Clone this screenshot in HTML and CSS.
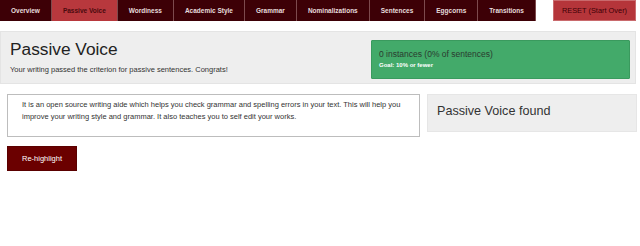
FILE: index.html
```html
<!DOCTYPE html>
<html lang="en">
<head>
    <meta charset="UTF-8">
    <meta name="viewport" content="width=device-width, initial-scale=1.0">
    <title>Passive Voice</title>
    <link rel="stylesheet" href="styles.css">
</head>
<body>
    <div class="nav">
        <div class="tabs">
            <a class="tab">Overview</a>
            <a class="tab active">Passive Voice</a>
            <a class="tab">Wordiness</a>
            <a class="tab">Academic Style</a>
            <a class="tab">Grammar</a>
            <a class="tab">Nominalizations</a>
            <a class="tab">Sentences</a>
            <a class="tab">Eggcorns</a>
            <a class="tab">Transitions</a>
        </div>
        <button class="reset">RESET (Start Over)</button>
    </div>

    <div class="header">
        <div class="intro">
            <h1>Passive Voice</h1>
            <p>Your writing passed the criterion for passive sentences. Congrats!</p>
        </div>
        <div class="result">
            <div class="count">0 instances (0% of sentences)</div>
            <div class="goal">Goal: 10% or fewer</div>
        </div>
    </div>

    <div class="content">
        <div class="row">
            <div class="text-box">It is an open source writing aide which helps you check grammar and spelling errors in your text. This will help you improve your writing style and grammar. It also teaches you to self edit your works.</div>
            <div class="found">Passive Voice found</div>
        </div>
        <button class="rehighlight">Re-highlight</button>
    </div>
</body>
</html>
```

FILE: styles.css
```css
body {
    font-family: 'Liberation Sans', Arial, sans-serif;
    color: #333;
    margin: 0;
    background-color: #ffffff;
}
.nav {
    display: flex;
    width: 636px;
    height: 21px;
}
.tabs {
    display: flex;
    background-color: #3d0006;
}
.tab {
    display: block;
    padding: 0 11px;
    line-height: 21px;
    font-size: 6.5px;
    font-weight: bold;
    color: #e6dcdc;
    border-right: 1px solid #7d4a4d;
    cursor: pointer;
}
.tab.active {
    background-color: #b8383d;
    color: #4a0a0e;
}
.reset {
    margin-left: auto;
    width: 83px;
    height: 21px;
    padding: 0;
    background-color: #b5353a;
    border: 1px solid #c96a6d;
    color: #3d0006;
    font-family: inherit;
    font-size: 7.4px;
    cursor: pointer;
}
.header {
    display: flex;
    justify-content: space-between;
    width: 636px;
    height: 53px;
    box-sizing: border-box;
    margin-top: 10px;
    background-color: #eeeeee;
    border: 1px solid #e4e4e4;
}
.intro {
    padding: 8px 0 0 9px;
}
h1 {
    margin: 0;
    font-size: 17.3px;
    line-height: 18px;
    font-weight: normal;
    color: #222;
}
.intro p {
    margin: 8px 0 0;
    font-size: 7.5px;
    line-height: 8px;
}
.result {
    width: 259px;
    height: 39px;
    box-sizing: border-box;
    margin: 8px 5px 0 0;
    padding: 8px 7px 0;
    background-color: #43aa6a;
    border: 1px solid #3a9a5e;
    border-radius: 1px;
}
.count {
    font-size: 8.5px;
    line-height: 10px;
    color: #2a3a2f;
}
.goal {
    margin-top: 3px;
    font-size: 6px;
    line-height: 7px;
    font-weight: bold;
    color: #ffffff;
}
.content {
    margin: 10px 3px 0 7px;
}
.row {
    display: flex;
    gap: 7px;
}
.text-box {
    width: 413px;
    height: 43px;
    box-sizing: border-box;
    padding: 4px 14px 0 14px;
    border: 1px solid #bdbdbd;
    font-size: 7.5px;
    line-height: 12px;
}
.found {
    flex: 1;
    height: 38px;
    box-sizing: border-box;
    padding: 9px 9px 0;
    background-color: #eeeeee;
    border: 1px solid #e6e6e6;
    font-size: 12.6px;
    line-height: 14px;
}
.rehighlight {
    display: block;
    margin-top: 9px;
    width: 70px;
    height: 25px;
    padding: 0;
    background-color: #6b0000;
    border: 1px solid #5a0000;
    color: #ffffff;
    font-family: inherit;
    font-size: 7.5px;
    cursor: pointer;
}
```
